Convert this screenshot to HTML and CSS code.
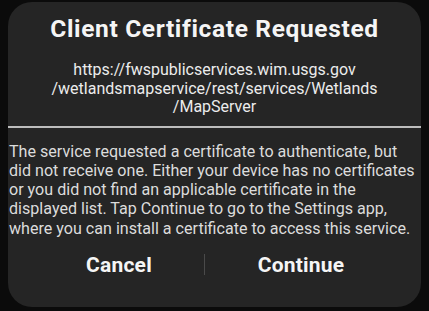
FILE: index.html
```html
<!DOCTYPE html>
<html>
<head>
<meta charset="utf-8">
<link rel="stylesheet" href="styles.css">
</head>
<body>
<div class="dialog">
  <div class="title">Client Certificate Requested</div>
  <div class="url">https://fwspublicservices.wim.usgs.gov<br>/wetlandsmapservice/rest/services/Wetlands<br>/MapServer</div>
  <div class="rule"></div>
  <div class="message">The service requested a certificate to authenticate, but<br>did not receive one. Either your device has no certificates<br>or you did not find an applicable certificate in the<br>displayed list. Tap Continue to go to the Settings app,<br>where you can install a certificate to access this service.</div>
  <div class="actions">
    <div class="btn btn-cancel">Cancel</div>
    <div class="sep"></div>
    <div class="btn btn-continue">Continue</div>
  </div>
</div>
</body>
</html>
```

FILE: styles.css
```css
html, body {
  margin: 0;
  padding: 0;
}
body {
  background: #0b0b0b;
  width: 429px;
  height: 311px;
  overflow: hidden;
  font-family: Roboto, "Liberation Sans", sans-serif;
}
.dialog {
  margin: 2px 8px 0;
  width: 413px;
  height: 305px;
  box-sizing: border-box;
  border-radius: 24px;
  background: #252525;
  padding-top: 11px;
  display: flex;
  flex-direction: column;
}
.title {
  font-weight: 700;
  font-size: 24.5px;
  letter-spacing: 0.65px;
  line-height: 32px;
  color: #f5f5f5;
  text-align: center;
}
.url {
  margin-top: 16px;
  font-size: 16px;
  line-height: 18.5px;
  color: #ececec;
  text-align: center;
}
.rule {
  margin-top: 9px;
  height: 2px;
  background: #bdbdbd;
}
.message {
  margin-top: 14px;
  padding-left: 1px;
  font-size: 16.1px;
  line-height: 19.3px;
  color: #dcdcdc;
  white-space: nowrap;
}
.actions {
  margin-top: 15px;
  padding-left: 26px;
  display: flex;
  align-items: center;
  height: 24px;
}
.btn {
  text-align: center;
  font-weight: 700;
  font-size: 21px;
  letter-spacing: 0.2px;
  color: #f5f5f5;
}
.btn-cancel {
  width: 170px;
}
.btn-continue {
  width: 192px;
}
.sep {
  width: 1px;
  height: 21px;
  background: #4a4a4a;
}
```
